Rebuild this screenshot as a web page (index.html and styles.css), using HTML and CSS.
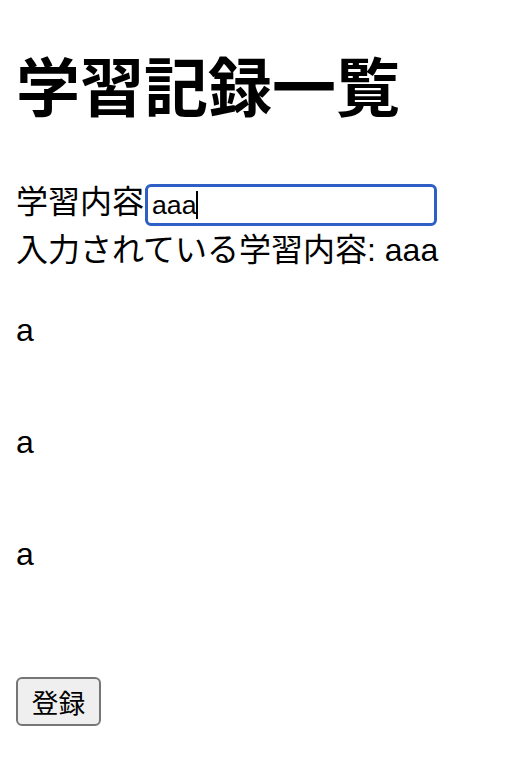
FILE: index.html
```html
<!DOCTYPE html>
<html lang="ja">
<head>
<meta charset="utf-8">
<title>学習記録一覧</title>
<link rel="stylesheet" href="styles.css">
</head>
<body>
<div class="page">
  <h1 class="title">学習記録一覧</h1>
  <div class="field-row">
    <label class="field-label" for="content">学習内容</label><span class="input-wrap"><input id="content" class="field-input" type="text" value="aaa"><span class="caret"></span></span>
  </div>
  <p class="current">入力されている学習内容: aaa</p>
  <div class="records">
    <p class="record">a</p>
    <p class="record">a</p>
    <p class="record">a</p>
  </div>
  <button class="submit" type="button">登録</button>
</div>
</body>
</html>
```

FILE: styles.css
```css
html, body {
  margin: 0;
  padding: 0;
  background: #ffffff;
}

body {
  font-family: "Liberation Sans", "Noto Sans CJK JP", sans-serif;
  font-size: 32px;
  color: #000000;
}

.page {
  padding: 52px 16px 0 16px;
  display: flex;
  flex-direction: column;
  align-items: flex-start;
}

.title {
  margin: 0;
  font-size: 64px;
  font-weight: bold;
  line-height: 74px;
}

.field-row {
  margin-top: 58px;
  display: flex;
  align-items: flex-start;
}

.field-label {
  line-height: 36px;
}

.input-wrap {
  position: relative;
  display: block;
  margin-left: 1px;
}

.field-input {
  display: block;
  box-sizing: border-box;
  width: 292px;
  height: 42px;
  margin: 0;
  padding: 0 4px;
  border: 3px solid #2d5fc4;
  border-radius: 6px;
  outline: none;
  font-family: "Liberation Sans", "Noto Sans CJK JP", sans-serif;
  font-size: 26.67px;
  color: #000000;
  background: #ffffff;
  caret-color: transparent;
}

.caret {
  position: absolute;
  left: 51px;
  top: 7px;
  width: 2px;
  height: 28px;
  background: #000000;
}

.current {
  margin: 6px 0 0 0;
  line-height: 36px;
}

.records {
  margin-top: 44px;
  display: flex;
  flex-direction: column;
  gap: 76px;
}

.record {
  margin: 0;
  line-height: 36px;
}

.submit {
  margin-top: 105px;
  box-sizing: border-box;
  width: 85px;
  height: 49px;
  padding: 0;
  border: 2px solid #767676;
  border-radius: 6px;
  background: #efefef;
  font-family: "Liberation Sans", "Noto Sans CJK JP", sans-serif;
  font-size: 26.67px;
  color: #000000;
  display: flex;
  align-items: center;
  justify-content: center;
}
```
